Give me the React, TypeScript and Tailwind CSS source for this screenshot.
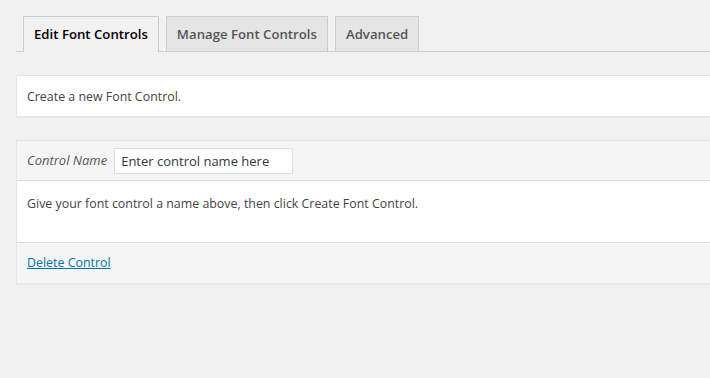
import React from 'react';

const tabs = [
  { label: 'Edit Font Controls', active: true },
  { label: 'Manage Font Controls', active: false },
  { label: 'Advanced', active: false },
];

const App: React.FC = () => {
  return (
    <div
      className="h-[378px] overflow-hidden bg-[#f1f1f1] pl-4 pt-4 text-[12.4px] text-[#444]"
      style={{ fontFamily: '"Open Sans", "Noto Sans", sans-serif' }}
    >
      {/* Tabs */}
      <nav className="flex gap-[7px] border-b border-[#ccc] pl-[7px]">
        {tabs.map((tab) => (
          <div
            key={tab.label}
            className={
              tab.active
                ? '-mb-px flex h-[36px] items-center border border-b-0 border-[#ccc] bg-[#f1f1f1] px-[10px] pt-px text-[13.2px] font-semibold text-black'
                : 'flex h-[35px] items-center border border-b-0 border-[#ccc] bg-[#e5e5e5] px-[10px] pt-px text-[13.2px] font-semibold text-[#555]'
            }
          >
            {tab.label}
          </div>
        ))}
      </nav>

      {/* Intro panel */}
      <div className="mt-[23px] mr-[-20px] border border-[#e5e5e5] bg-white px-[10px] pt-[12px] pb-[10px] leading-[18px] shadow-[0_1px_1px_rgba(0,0,0,0.04)]">
        Create a new Font Control.
      </div>

      {/* Control panel */}
      <div className="mt-[23px] mr-[-20px] border border-[#e5e5e5] bg-white shadow-[0_1px_1px_rgba(0,0,0,0.04)]">
        <div className="flex h-[40px] items-center gap-[7px] border-b border-[#ddd] bg-[#f5f5f5] px-[10px]">
          <label className="text-[13px] italic text-[#555]">Control Name</label>
          <input
            type="text"
            placeholder="Enter control name here"
            className="h-[26px] w-[179px] border border-[#ddd] bg-white px-[6px] text-[13px] text-[#32373c] placeholder:text-[#32373c] outline-none"
          />
        </div>
        <div className="h-[62px] border-b border-[#ddd] px-[10px] pt-[14px] leading-[18px]">
          Give your font control a name above, then click Create Font Control.
        </div>
        <div className="flex h-[40px] items-center bg-[#f5f5f5] px-[10px] pt-px">
          <a href="#" className="text-[#0073aa] underline">
            Delete Control
          </a>
        </div>
      </div>
    </div>
  );
};

export default App;
